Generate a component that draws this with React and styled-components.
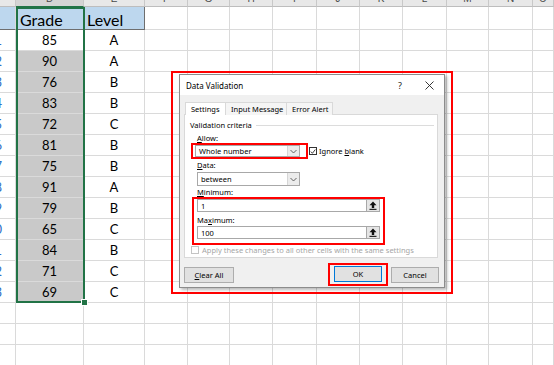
import React from "react"
import styled, { createGlobalStyle } from "styled-components"

const GlobalStyle = createGlobalStyle`
  html, body { margin: 0; padding: 0; background: #fff; }
  body { overflow: hidden; }
`

const COLS = [16, 68, 61, 43, 42, 43, 44, 43, 43, 44, 42, 44, 21]
const LETTERS = ["", "D", "E", "F", "G", "H", "I", "J", "K", "L", "M", "N", "O"]

const grades = [
  ["1", 85, "A"], ["2", 90, "A"], ["3", 76, "B"], ["4", 83, "B"],
  ["5", 72, "C"], ["6", 81, "B"], ["7", 75, "B"], ["8", 91, "A"],
  ["9", 79, "B"], ["0", 65, "C"], ["1", 84, "B"], ["2", 71, "C"],
  ["3", 69, "C"],
]

const GRID = "#dadada"
const EDGE = "#6e6e6e"
const HEAD_BLUE = "#bdd7ee"
const PICKED = "#c9c9c9"
const EXCEL_GREEN = "#217346"

const Sheet = styled.div`
  position: relative;
  width: 554px;
  height: 365px;
  overflow: hidden;
  background: #fff;
`

const Row = styled.div`
  display: grid;
  grid-template-columns: ${COLS.map(c => c + "px").join(" ")};
  height: ${p => p.$h}px;
`

const Cell = styled.div`
  box-sizing: border-box;
  height: 100%;
  border-right: 1px solid ${p => (p.$edgeRight ? EDGE : GRID)};
  border-bottom: 1px solid ${p => (p.$edgeBottom ? EDGE : GRID)};
  background: ${p => p.$bg || "#fff"};
  display: flex;
  align-items: center;
  justify-content: ${p => p.$align || "center"};
  padding: ${p => p.$pad || "0"};
  overflow: hidden;
  white-space: nowrap;
  font-family: Lato, "Liberation Sans", sans-serif;
  font-size: ${p => p.$size || 13}px;
  color: ${p => p.$color || "#000"};
`

const ColHead = styled.div`
  box-sizing: border-box;
  height: 100%;
  background: ${p => (p.$active ? "#d4d4d4" : "#e8e8e8")};
  border-right: 1px solid #c8c8c8;
  border-bottom: 1px solid ${p => (p.$active ? EXCEL_GREEN : "#bdbdbd")};
  display: flex;
  align-items: flex-end;
  justify-content: center;
  overflow: hidden;
  font-family: "Liberation Sans", sans-serif;
  font-size: 10px;
  line-height: 10px;
  color: #4a4a4a;

  span { margin-bottom: 2px; }
`

const Selection = styled.div`
  position: absolute;
  left: 16px;
  top: 7px;
  width: 69px;
  height: 296px;
  box-sizing: border-box;
  border: 2px solid ${EXCEL_GREEN};
  pointer-events: none;
`

const FillHandle = styled.div`
  position: absolute;
  left: 82px;
  top: 300px;
  width: 5px;
  height: 5px;
  background: ${EXCEL_GREEN};
  box-shadow: 0 0 0 1px #fff;
`

/* ---------- dialog ---------- */

const Frame = styled.div`
  position: absolute;
  left: 171px;
  top: 71px;
  width: 282px;
  height: 223px;
  box-sizing: border-box;
  border: 2px solid #f00;
  padding: 1px 0 0 6px;
`

const Window = styled.div`
  width: 266px;
  height: 214px;
  box-sizing: border-box;
  border: 1px solid #8c8c8c;
  background: #f0f0f0;
  box-shadow: 2px 2px 3px rgba(0, 0, 0, 0.28);
  display: flex;
  flex-direction: column;
  font-family: "Noto Sans", "Open Sans", sans-serif;
  font-size: 7.5px;
  color: #000;
`

const TitleBar = styled.div`
  height: 20px;
  background: #fff;
  display: flex;
  align-items: center;
  padding: 0 10px 0 6px;
  font-size: 8px;
`

const Title = styled.div`
  flex: 1;
`

const Help = styled.div`
  font-size: 9px;
  margin-right: 23px;
  color: #222;
`

const Body = styled.div`
  flex: 1;
  display: flex;
  flex-direction: column;
  padding: 7px 6px 0 4px;
`

const Tabs = styled.div`
  display: flex;
  height: 13px;
  margin-left: 1px;
`

const Tab = styled.div`
  box-sizing: border-box;
  width: ${p => p.$w}px;
  height: 100%;
  margin-right: -1px;
  border: 1px solid #d9d9d9;
  border-bottom: none;
  background: ${p => (p.$on ? "#fff" : "#f5f5f5")};
  display: flex;
  align-items: center;
  padding-left: 5px;
  position: relative;
  z-index: ${p => (p.$on ? 1 : 0)};
`

const Panel = styled.div`
  box-sizing: border-box;
  height: 144px;
  background: #fff;
  border: 1px solid #d9d9d9;
  margin-top: -1px;
  display: flex;
  flex-direction: column;
`

const GroupHead = styled.div`
  display: flex;
  align-items: center;
  height: 12px;
  margin-top: 4px;
  padding-left: 5px;

  &::after {
    content: "";
    flex: 1;
    border-top: 1px solid #dcdcdc;
    margin: 0 3px 0 4px;
  }
`

const Label = styled.div`
  height: 10px;
  line-height: 10px;
  margin-top: ${p => p.$mt || 0}px;
  padding-left: ${p => (p.$flat ? 0 : 12)}px;
`

const U = styled.span`
  text-decoration: underline;
`

const AllowRow = styled.div`
  display: flex;
  align-items: center;
  height: 16px;
`

const Mark = styled.div`
  box-sizing: border-box;
  border: 2px solid #f00;
`

const AllowMark = styled(Mark)`
  width: 117px;
  height: 16px;
  margin-left: 6px;
  padding: 0 6px 0 2px;
  display: flex;
  align-items: center;
`

const Select = styled.div`
  box-sizing: border-box;
  width: ${p => p.$w}px;
  height: ${p => p.$h}px;
  margin-left: ${p => p.$ml || 0}px;
  margin-top: ${p => p.$mt || 0}px;
  border: 1px solid #a8a8a8;
  background: #fff;
  display: flex;
  align-items: center;
  padding-left: 3px;
`

const SelectText = styled.div`
  flex: 1;
`

const Drop = styled.div`
  width: 11px;
  align-self: stretch;
  background: #ececec;
  border-left: 1px solid #d6d6d6;
  display: flex;
  align-items: center;
  justify-content: center;
`

const Check = styled.div`
  box-sizing: border-box;
  width: ${p => p.$s}px;
  height: ${p => p.$s}px;
  margin-left: ${p => p.$ml || 0}px;
  border: 1px solid ${p => (p.$off ? "#c4c4c4" : "#333")};
  background: #fff;
  display: flex;
  align-items: center;
  justify-content: center;
`

const CheckText = styled.div`
  margin-left: ${p => p.$ml || 2}px;
  color: ${p => (p.$off ? "#a6a6a6" : "#000")};
`

const RangeMark = styled(Mark)`
  width: 193px;
  height: 48px;
  margin-left: 7px;
  padding: 0 3px;
  display: flex;
  flex-direction: column;
`

const Input = styled.div`
  box-sizing: border-box;
  height: 13px;
  margin-top: ${p => p.$mt || 0}px;
  border: 1px solid #a8a8a8;
  display: flex;
  align-items: center;
  padding-left: 3px;
`

const InputText = styled.div`
  flex: 1;
`

const Spin = styled.div`
  box-sizing: border-box;
  width: 14px;
  align-self: stretch;
  margin: -1px -1px -1px 0;
  height: 13px;
  background: #e5e5e5;
  border: 1px solid #a8a8a8;
  display: flex;
  align-items: center;
  justify-content: center;
`

const ApplyRow = styled.div`
  display: flex;
  align-items: center;
  height: 8px;
  margin-top: 1px;
`

const Buttons = styled.div`
  display: flex;
  align-items: center;
  height: 23px;
  margin-top: 5px;
  margin-right: -1px;
`

const Button = styled.div`
  box-sizing: border-box;
  width: ${p => p.$w}px;
  height: 16px;
  margin-left: ${p => p.$ml || 0}px;
  background: #e1e1e1;
  border: 1px solid ${p => (p.$default ? "#0078d7" : "#adadad")};
  display: flex;
  align-items: center;
  justify-content: center;
`

const OkMark = styled(Mark)`
  margin-left: auto;
  padding: 1px 4px 2px 4px;
`

const Chevron = () => (
  <svg width="7" height="5" viewBox="0 0 7 5">
    <polyline points="0.5,1 3.5,4 6.5,1" fill="none" stroke="#555" strokeWidth="0.9" />
  </svg>
)

const Tick = () => (
  <svg width="7" height="7" viewBox="0 0 7 7">
    <polyline points="1,3.6 2.8,5.6 6.2,1.2" fill="none" stroke="#222" strokeWidth="1" />
  </svg>
)

const CloseIcon = () => (
  <svg width="9" height="9" viewBox="0 0 9 9">
    <path d="M0.5 0.5 L8.5 8.5 M8.5 0.5 L0.5 8.5" stroke="#222" strokeWidth="0.9" />
  </svg>
)

const CollapseIcon = () => (
  <svg width="8" height="9" viewBox="0 0 8 9">
    <path d="M4 0.5 L7.5 4.2 H5.2 V7 H2.8 V4.2 H0.5 Z" fill="#111" />
    <rect x="0.5" y="7.8" width="7" height="1.1" fill="#111" />
  </svg>
)

function DataValidation() {
  return (
    <Frame>
      <Window>
        <TitleBar>
          <Title>Data Validation</Title>
          <Help>?</Help>
          <CloseIcon />
        </TitleBar>
        <Body>
          <Tabs>
            <Tab $w={41} $on>Settings</Tab>
            <Tab $w={62}>Input Message</Tab>
            <Tab $w={47}>Error Alert</Tab>
          </Tabs>
          <Panel>
            <GroupHead>Validation criteria</GroupHead>
            <Label $mt={2}><U>A</U>llow:</Label>
            <AllowRow>
              <AllowMark>
                <Select $w={105} $h={12}>
                  <SelectText>Whole number</SelectText>
                  <Drop><Chevron /></Drop>
                </Select>
              </AllowMark>
              <Check $s={8} $ml={1}><Tick /></Check>
              <CheckText>Ignore <U>b</U>lank</CheckText>
            </AllowRow>
            <Label $mt={1}><U>D</U>ata:</Label>
            <Select $w={103} $h={14} $ml={12} $mt={2}>
              <SelectText>between</SelectText>
              <Drop><Chevron /></Drop>
            </Select>
            <Label $mt={1}><U>M</U>inimum:</Label>
            <RangeMark>
              <Input>
                <InputText>1</InputText>
                <Spin><CollapseIcon /></Spin>
              </Input>
              <Label $mt={3} $flat>Ma<U>x</U>imum:</Label>
              <Input $mt={1}>
                <InputText>100</InputText>
                <Spin><CollapseIcon /></Spin>
              </Input>
            </RangeMark>
            <ApplyRow>
              <Check $s={8} $ml={6} $off />
              <CheckText $off $ml={3}>Apply these changes to all other cells with the same settings</CheckText>
            </ApplyRow>
          </Panel>
          <Buttons>
            <Button $w={50}><U>C</U>lear All</Button>
            <OkMark>
              <Button $w={48} $default>OK</Button>
            </OkMark>
            <Button $w={48} $ml={3}>Cancel</Button>
          </Buttons>
        </Body>
      </Window>
    </Frame>
  )
}

function Blank({ h }) {
  return (
    <Row $h={h}>
      {COLS.map((_, i) => <Cell key={i} />)}
    </Row>
  )
}

export default function App() {
  return (
    <>
      <GlobalStyle />
      <Sheet>
        <Row $h={7}>
          {LETTERS.map((l, i) => (
            <ColHead key={i} $active={l === "D"}><span>{l}</span></ColHead>
          ))}
        </Row>
        <Row $h={23}>
          <Cell $bg={HEAD_BLUE} $edgeBottom />
          <Cell $bg={HEAD_BLUE} $edgeBottom $align="flex-start" $pad="2px 0 0 4px" $size={16}>Grade</Cell>
          <Cell $bg={HEAD_BLUE} $edgeBottom $edgeRight $align="flex-start" $pad="2px 0 0 3px" $size={16}>Level</Cell>
          {COLS.slice(3).map((_, i) => <Cell key={i} />)}
        </Row>
        {grades.map(([id, grade, level], r) => (
          <Row $h={21} key={r}>
            <Cell $align="flex-end" $pad="0 13px 0 0" $color="#2f6fc6">{id}</Cell>
            <Cell $bg={r === 0 ? "#fff" : PICKED}>{grade}</Cell>
            <Cell>{level}</Cell>
            {COLS.slice(3).map((_, i) => <Cell key={i} />)}
          </Row>
        ))}
        <Blank h={21} />
        <Blank h={21} />
        <Blank h={21} />
        <Selection />
        <FillHandle />
        <DataValidation />
      </Sheet>
    </>
  )
}
